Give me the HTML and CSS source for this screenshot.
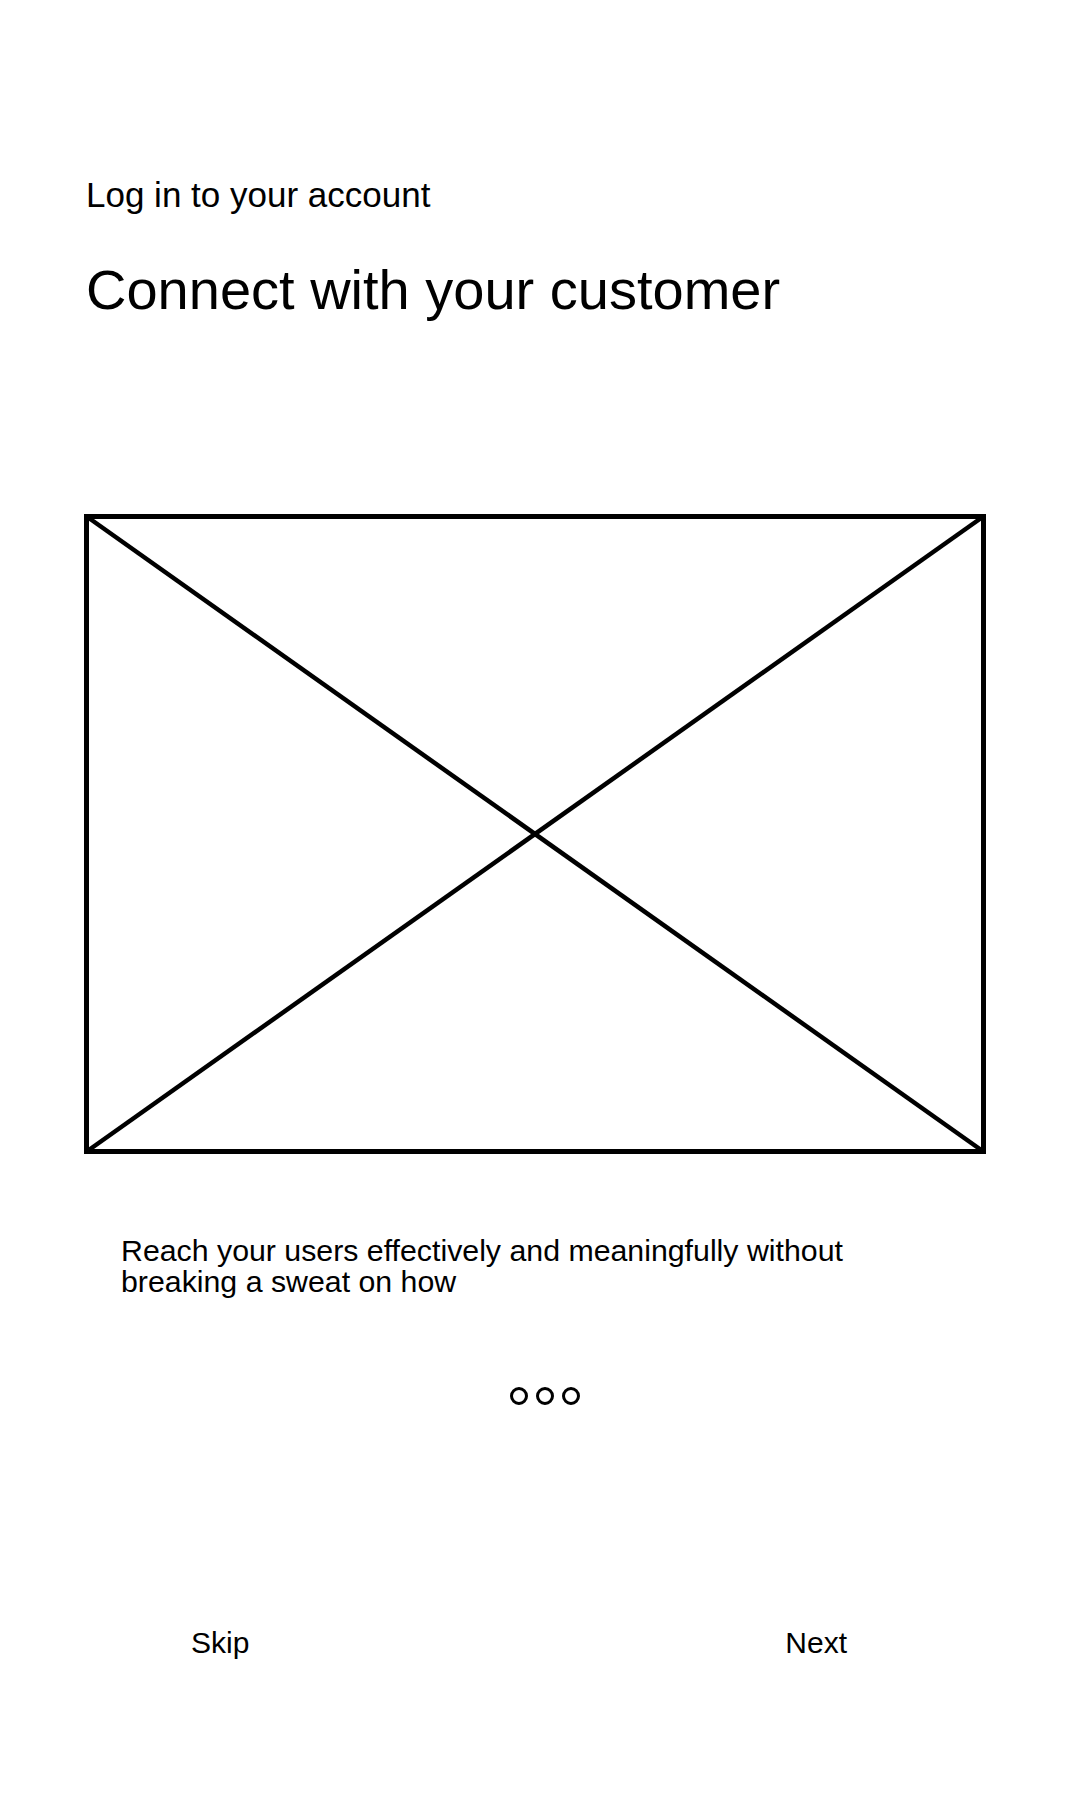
FILE: index.html
```html
<!DOCTYPE html>
<html lang="en">
<head>
<meta charset="utf-8">
<title>Connect with your customer</title>
<link rel="stylesheet" href="styles.css">
</head>
<body>
<main class="screen">
  <header class="intro">
    <p class="eyebrow">Log in to your account</p>
    <h1 class="title">Connect with your customer</h1>
  </header>
  <div class="placeholder">
    <svg viewBox="0 0 902 640" width="902" height="640" aria-hidden="true">
      <rect x="2.5" y="2.5" width="897" height="635" fill="none" stroke="#000" stroke-width="5"/>
      <line x1="2" y1="2" x2="900" y2="638" stroke="#000" stroke-width="4.5"/>
      <line x1="900" y1="2" x2="2" y2="638" stroke="#000" stroke-width="4.5"/>
    </svg>
  </div>
  <p class="desc">Reach your users effectively and meaningfully without<br>breaking a sweat on how</p>
  <div class="dots">
    <span class="dot"></span><span class="dot"></span><span class="dot"></span>
  </div>
  <nav class="actions">
    <span class="action">Skip</span>
    <span class="action">Next</span>
  </nav>
</main>
</body>
</html>
```
FILE: styles.css
```css
html, body {
  margin: 0;
  padding: 0;
  background: #fff;
}
body {
  font-family: "Liberation Sans", Arial, sans-serif;
  color: #000;
}
.screen {
  width: 1080px;
  height: 1800px;
  padding-top: 175px;
  box-sizing: border-box;
}
.intro {
  padding-left: 86px;
}
.eyebrow {
  margin: 0;
  font-size: 35px;
  line-height: 40px;
  font-weight: normal;
}
.title {
  margin: 43px 0 0;
  font-size: 56px;
  line-height: 64px;
  font-weight: normal;
}
.placeholder {
  margin: 192px 0 0 84px;
  width: 902px;
  height: 640px;
}
.placeholder svg {
  display: block;
}
.desc {
  margin: 81px 0 0 121px;
  font-size: 30.3px;
  line-height: 31px;
}
.dots {
  margin-top: 90px;
  display: flex;
  justify-content: center;
  gap: 8px;
  height: 18px;
  padding-left: 10px;
}
.dot {
  width: 18px;
  height: 18px;
  box-sizing: border-box;
  border: 3.5px solid #000;
  border-radius: 50%;
}
.actions {
  margin-top: 220px;
  display: flex;
  justify-content: space-between;
  padding: 0 233px 0 191px;
  font-size: 30px;
  line-height: 36px;
}
```
